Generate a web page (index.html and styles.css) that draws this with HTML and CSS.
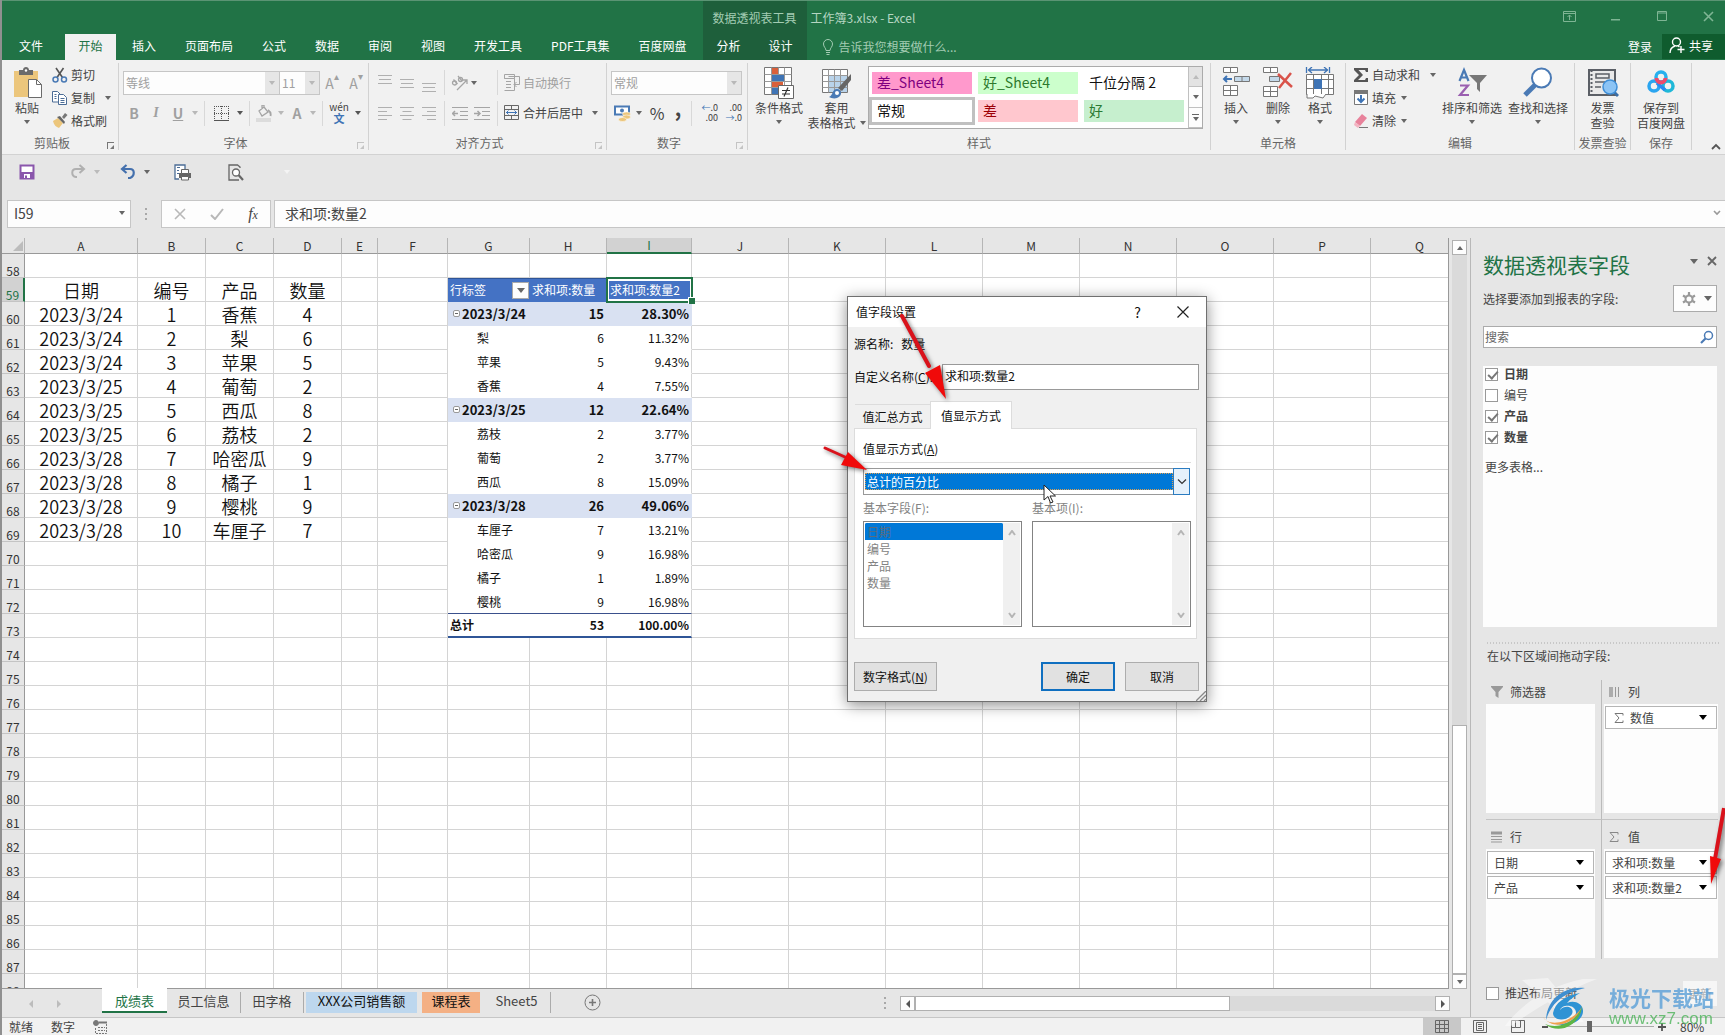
FILE: index.html
```html
<!DOCTYPE html>
<html lang="zh-CN">
<head>
<meta charset="utf-8">
<title>工作簿3.xlsx - Excel</title>
<link rel="stylesheet" href="styles.css">
</head>
<body>
<div class="app">
  <header class="titlebar">
    <nav class="tabs">
      <button class="tab file">文件</button>
      <button class="tab active">开始</button>
      <button class="tab">插入</button>
      <button class="tab">页面布局</button>
      <button class="tab">公式</button>
      <button class="tab">数据</button>
      <button class="tab">审阅</button>
      <button class="tab">视图</button>
      <button class="tab">开发工具</button>
      <button class="tab">PDF工具集</button>
      <button class="tab">百度网盘</button>
    </nav>
    <div class="context">
      <div class="context-title">数据透视表工具</div>
      <div class="context-tabs"><button class="tab">分析</button><button class="tab">设计</button></div>
    </div>
    <div class="doc">
      <div class="doc-title">工作簿3.xlsx - Excel</div>
      <button class="tell"><svg width="12" height="16" viewBox="0 0 12 16" fill="none" stroke="#a3ccb3"><path d="M4 11.5C4 9 1.5 8 1.5 5a4.5 4.5 0 0 1 9 0c0 3-2.500 4-2.500 6.500zM4 13.500h4M4.500 15.500h3"/></svg>告诉我您想要做什么...</button>
    </div>
    <div class="win">
      <div class="win-controls">
        <button aria-label="功能区显示选项"><svg width="14" height="12" viewBox="0 0 14 12" fill="none" stroke="#7fb594"><path d="M.5.5h12v10H.5zM.5 2.500h12M6.500 9V4M4.500 6l2-2 2 2"/></svg></button>
        <button aria-label="最小化"><svg width="14" height="12" viewBox="0 0 14 12"><path d="M2 8h9v1.500H2z" fill="#7fb594"/></svg></button>
        <button aria-label="最大化"><svg width="14" height="12" viewBox="0 0 14 12" fill="none" stroke="#7fb594"><path d="M2.500.5h9v9h-9zM2.500 2h9"/></svg></button>
        <button aria-label="关闭"><svg width="14" height="12" viewBox="0 0 14 12" fill="none" stroke="#7fb594" stroke-width="1.600"><path d="M3 1l9 9M12 1l-9 9"/></svg></button>
      </div>
      <div class="account">
        <button class="login">登录</button>
        <button class="share"><svg width="16" height="17" viewBox="0 0 16 17" fill="none" stroke="#fff" stroke-width="1.400"><circle cx="7.500" cy="5" r="4"/><path d="M1 16c0-4 2-6 5-7M9 9l1.500 1M12 9v7M8.500 12.500h7"/></svg>共享</button>
      </div>
    </div>
  </header>

  <section class="ribbon">
    <div class="group g-clip">
      <div class="content">
        <button class="big paste">
          <svg width="30" height="32" viewBox="0 0 30 32"><path d="M1 4h24v26H1z" fill="#ecc67c"/><path d="M6 3h4c0-4 6-4 6 0h4v5H6z" fill="#6b6b6b"/><circle cx="13" cy="3.500" r="1.200" fill="#fff"/><path d="M15.500 12.500h8l5 5v13h-13z" fill="#fff" stroke="#6b6b6b"/><path d="M23.500 12.500v5h5" fill="none" stroke="#6b6b6b"/></svg>
          <span>粘贴</span><i class="caret"></i></button>
        <div class="smalls">
          <button class="small"><svg width="16" height="16" viewBox="0 0 16 16" fill="none" stroke="#555" stroke-width="1.600"><path d="M4 1l6.500 9.500M11.500 1L5 10.500"/><g stroke="#4a7ab5" stroke-width="1.500"><circle cx="3.500" cy="12.500" r="2.500"/><circle cx="12" cy="12.500" r="2.500"/></g></svg>剪切</button>
          <button class="small"><svg width="16" height="16" viewBox="0 0 16 16" fill="#fff" stroke="#4c6d96"><path d="M.5 1.500h5l2.500 2.500v8H.5z"/><path d="M6.500 4.500h5l3 3v7h-8z"/><path d="M2.500 4.500h2M2.500 6.500h2M2.500 8.500h2M8.500 8.500h4M8.500 10.500h4M8.500 12.500h4"/></svg>复制<i class="caret far"></i></button>
          <button class="small"><svg width="16" height="16" viewBox="0 0 16 16"><path d="M1 8l5-3 5 5-4 5C4 14 2 12 1 8z" fill="#ecc67c"/><path d="M5 4l3-1 5 6-1 2z" fill="#666"/><path d="M10 4l3-4 2.500 2-3.500 4z" fill="#777"/></svg>格式刷</button>
        </div>
      </div>
      <div class="caption">剪贴板</div><i class="launch on"></i>
    </div>

    <div class="group g-font">
      <div class="content rows off">
        <div class="row">
          <label class="combo font"><select aria-label="字体"><option>等线</option></select><b><i class="caret"></i></b></label>
          <label class="combo size"><select aria-label="字号"><option>11</option></select><b><i class="caret"></i></b></label>
          <button class="tool w24 grow">A<sup>▴</sup></button><button class="tool w24 shrink">A<sup>▾</sup></button>
        </div>
        <div class="row">
          <button class="tool bold">B</button><button class="tool ital">I</button><button class="tool undl">U</button><button class="tool car"><i class="caret"></i></button>
          <hr><button class="tool w26"><svg width="15" height="15" viewBox="0 0 15 15" stroke="#555" fill="none"><path d="M.5 0v14M7.500 0v14M14.500 0v14M0 .5h15M0 7.500h15" stroke-dasharray="1 1"/><path d="M0 14.500h15"/></svg></button><button class="tool car"><i class="caret dark"></i></button>
          <hr><button class="tool"><svg width="16" height="17" viewBox="0 0 16 17"><path d="M3 6l5-4 4 5-6 4zM6 4V0h2v3" fill="none" stroke="#a5a5a5" stroke-width="1.300"/><path d="M12 5c3 2 3 4 2.500 6" fill="none" stroke="#a5a5a5" stroke-width="1.800"/><path d="M0 13h15v4H0z" fill="#dcdcdc"/></svg></button><button class="tool car"><i class="caret"></i></button><button class="tool w20 fcol">A</button><button class="tool car"><i class="caret"></i></button>
          <hr><button class="tool w26 wen"><span>wén</span><b>文</b></button><button class="tool car"><i class="caret dark"></i></button>
        </div>
      </div>
      <div class="caption">字体</div><i class="launch"></i>
    </div>

    <div class="group g-align">
      <div class="content rows">
        <div class="row">
          <button class="tool al"><svg width="14" height="18" viewBox="0 0 14 18" stroke="#b0b0b0"><path d="M0 1.500h14M1 5.500h12M0 9.500h14"/></svg></button>
          <button class="tool al"><svg width="14" height="18" viewBox="0 0 14 18" stroke="#b0b0b0"><path d="M0 5.500h14M1 9.500h12M0 13.500h14"/></svg></button>
          <button class="tool al"><svg width="14" height="18" viewBox="0 0 14 18" stroke="#b0b0b0"><path d="M0 9.500h14M1 13.500h12M0 17.500h14"/></svg></button>
          <hr><button class="tool"><svg width="18" height="16" viewBox="0 0 18 16" fill="none" stroke="#a5a5a5" stroke-width="1.300"><circle cx="3.500" cy="8" r="2"/><path d="M2.500 4.500l4 4.500M7 1l4 5"/><circle cx="9.500" cy="4.500" r="2"/><path d="M6 15L16 5M16 9V5h-4"/></svg></button><i class="caret"></i>
          <hr class="second"><button class="tool text off"><svg width="16" height="17" viewBox="0 0 16 17" fill="none" stroke="#a5a5a5"><path d="M.5.5h10v4H.5zM.5 16.500h10v-12H.5M2 7.500h5M2 10.500h5M2 13.500h5M4.500 2.500h11v8h-5M12.500 8l-2.500 2.500 2.500 2.500"/></svg>自动换行</button>
        </div>
        <div class="row">
          <button class="tool al"><svg width="14" height="13" viewBox="0 0 14 13" stroke="#b0b0b0"><path d="M0 .5h14M0 4.500h9M0 8.500h14M0 12.500h9"/></svg></button>
          <button class="tool al"><svg width="14" height="13" viewBox="0 0 14 13" stroke="#b0b0b0"><path d="M0 .5h14M2.500 4.500h9M0 8.500h14M2.500 12.500h9"/></svg></button>
          <button class="tool al"><svg width="14" height="13" viewBox="0 0 14 13" stroke="#b0b0b0"><path d="M0 .5h14M5 4.500h9M0 8.500h14M5 12.500h9"/></svg></button>
          <hr><button class="tool al"><svg width="16" height="13" viewBox="0 0 16 13" fill="none" stroke="#a5a5a5"><path d="M0 .5h16M8 4.500h8M8 8.500h8M0 12.500h16"/><path d="M1 6.500h5M3 4L.5 6.500 3 9" stroke-width="1.500"/></svg></button><button class="tool al"><svg width="16" height="13" viewBox="0 0 16 13" fill="none" stroke="#a5a5a5"><path d="M0 .5h16M8 4.500h8M8 8.500h8M0 12.500h16"/><path d="M0 6.500h5M3.500 4L6 6.500 3.500 9" stroke-width="1.500"/></svg></button>
          <hr class="third"><button class="tool text"><svg width="16" height="16" viewBox="0 0 16 16" fill="none" stroke="#666"><path d="M.5.5h14v14H.5zM.5 4.500h14M.5 10.500h14M7.500.5v4M7.500 10.500v4"/><path d="M2 7.500h11M4.500 5.500l-2 2 2 2M10.500 5.500l2 2-2 2" stroke="#3f74b5"/></svg>合并后居中<i class="caret dark"></i></button>
        </div>
      </div>
      <div class="caption">对齐方式</div><i class="launch"></i>
    </div>

    <div class="group g-num">
      <div class="content rows">
        <div class="row"><label class="combo num"><select aria-label="数字格式"><option>常规</option></select><b><i class="caret"></i></b></label></div>
        <div class="row">
          <button class="tool"><svg width="17" height="17" viewBox="0 0 17 17"><path d="M1 1.500h14v8H1z" fill="#fff" stroke="#4a7ab5" stroke-width="2"/><circle cx="8" cy="5.500" r="2" fill="#4a7ab5"/><g fill="#ecc67c" stroke="#fff" stroke-width=".5"><ellipse cx="12.500" cy="9" rx="4" ry="2"/><ellipse cx="12.500" cy="12" rx="4" ry="2"/><ellipse cx="8.500" cy="14.500" rx="4" ry="2"/></g></svg></button><button class="tool car"><i class="caret dark"></i></button><button class="tool w24 pct">%</button><button class="tool w20 comma">,</button>
          <hr><button class="tool w24 dec"><span><em>←</em>.0</span><span>.00</span></button><button class="tool w24 dec"><span>.00</span><span><em>→</em>.0</span></button>
        </div>
      </div>
      <div class="caption">数字</div><i class="launch"></i>
    </div>

    <div class="group g-style">
      <div class="content">
        <button class="big cond">
          <svg width="30" height="32" viewBox="0 0 30 32"><path d="M.5.5h27v27H.5z" fill="#fff" stroke="#777"/><path d="M8 1h6v6H8zM8 15h11v5H8z" fill="#d9603b"/><path d="M8 8h12v6H8zM8 21h6v6H8z" fill="#3f74b5"/><path d="M7.500.5v27M14.500.5v7M20.500.5v27M.5 7.500h27M.5 14.500h27M.5 20.500h27" fill="none" stroke="#999"/><path d="M14.500 18.500h15v13h-15z" fill="#fff" stroke="#666"/><path d="M18 23.500h8M18 27h8M24 20.500l-4 9" stroke="#333" stroke-width="1.200"/></svg>
          <span>条件格式</span><i class="caret"></i></button>
        <button class="big tfmt">
          <svg width="30" height="32" viewBox="0 0 30 32"><path d="M.5 2.500h25v23H.5z" fill="#fff" stroke="#777"/><path d="M7 9h18v16H7z" fill="#b9d3ea"/><path d="M6.500 2.500v23M12.500 2.500v23M18.500 2.500v23M.5 8.500h25M.5 14.500h25M.5 20.500h25" stroke="#999"/><path d="M29 7v6l-9 11-4-3z" fill="#666"/><path d="M7 30c4-1 3-8 8-8s6 7 0 9c-3 1-6 0-8-1z" fill="#4a7ab5"/><circle cx="15" cy="26" r="2" fill="#fff"/></svg>
          <span>套用</span><span>表格格式<i class="caret"></i></span></button>
        <div class="gallery">
          <div class="cells">
            <button class="st pink">差_Sheet4</button><button class="st lime">好_Sheet4</button><button class="st">千位分隔 2</button>
            <button class="st sel">常规</button><button class="st bad">差</button><button class="st good">好</button>
          </div>
          <div class="spin"><button class="dis" aria-label="上一行"><i class="caret up"></i></button><button aria-label="下一行"><i class="caret"></i></button><button class="more" aria-label="其他"><i class="caret"></i></button></div>
        </div>
      </div>
      <div class="caption">样式</div>
    </div>

    <div class="group g-cells">
      <div class="content">
        <button class="big w42"><svg width="30" height="32" viewBox="0 0 30 32" fill="#fff" stroke="#777"><path d="M2.500.5h14v5h-14zM9.500.5v5M2.500 18.500h14v10h-14zM9.500 18.500v10M2.500 23.500h14"/><path d="M13.500 9.500h15v5h-15zM21 9.500v5" fill="#c4d9ea"/><path d="M3 12h8M6 9l-3 3 3 3" fill="none" stroke="#3f74b5" stroke-width="2"/></svg><span>插入</span><i class="caret"></i></button>
        <button class="big w42"><svg width="30" height="32" viewBox="0 0 30 32" fill="#fff" stroke="#777"><path d="M.5.5h14v5H.5zM7.500.5v5M.5 19.500h14v10H.5zM7.500 19.500v10M.5 24.500h14"/><path d="M6.500 9.500h10v5h-10z" fill="#c4d9ea"/><path d="M15 7l14 13M28 6L16 21" fill="none" stroke="#d9534a" stroke-width="2.500"/></svg><span>删除</span><i class="caret"></i></button>
        <button class="big w42"><svg width="30" height="32" viewBox="0 0 30 32" fill="#fff" stroke="#777"><path d="M1.500 7.500h27v20h-27zM1.500 12.500h27M1.500 21.500h27M8.500 7.500v20M16.500 7.500v20M23.500 7.500v20"/><path d="M9 12h8v10H9z" fill="#3f74b5" stroke="none"/><path d="M2 27v4h6l2-2 8 2 3-4" /><path d="M1.500 0v6M24.500 0v6M3 3h20M7 0L3.500 3 7 6M19 0l3.500 3L19 6" fill="none" stroke="#3f74b5" stroke-width="1.300"/></svg><span>格式</span><i class="caret"></i></button>
      </div>
      <div class="caption">单元格</div>
    </div>

    <div class="group g-edit">
      <div class="content">
        <div class="smalls">
          <button class="small"><svg width="16" height="16" viewBox="0 0 16 16"><path d="M1 1h14v4h-2l-1-2H5.500L10 8l-5 5h7l1-2h2v4H1v-2l5-5-5-5z" fill="#555"/></svg>自动求和<i class="caret far"></i></button>
          <button class="small"><svg width="16" height="16" viewBox="0 0 16 16"><path d="M1.500 1.500h13v13h-13z" fill="#fff" stroke="#777"/><path d="M1 0h14v4H1z" fill="#777"/><path d="M8 5v7M4.500 8.500L8 12l3.500-3.500" fill="none" stroke="#3f74b5" stroke-width="2"/></svg>填充<i class="caret"></i></button>
          <button class="small"><svg width="16" height="16" viewBox="0 0 16 16"><path d="M2 9l7-8 5 4-7 8z" fill="#e8829b"/><path d="M2 9l5 4-2 2-4-3z" fill="#f3b3c1"/><path d="M6 14.500h9" stroke="#777"/></svg>清除<i class="caret"></i></button>
        </div>
        <button class="big w65"><svg width="30" height="32" viewBox="0 0 30 32"><path d="M2.500 14L7 3l4.500 11M4 10.500h6" fill="none" stroke="#4a7ab5" stroke-width="2.200"/><path d="M3 18.500h8L3 28h9" fill="none" stroke="#9a5fb0" stroke-width="2.200"/><path d="M12 8h18l-7 8v9l-3-3v-6z" fill="#777"/></svg><span>排序和筛选</span><i class="caret"></i></button>
        <button class="big w65"><svg width="30" height="32" viewBox="0 0 30 32" fill="#fff" stroke="#4a7ab5"><path d="M12 18L2 28" stroke-width="5"/><circle cx="18.500" cy="11" r="9.500" stroke-width="2"/></svg><span>查找和选择</span><i class="caret"></i></button>
      </div>
      <div class="caption">编辑</div>
    </div>

    <div class="group g-inv">
      <div class="content"><button class="big w55"><svg width="32" height="32" viewBox="0 0 32 32"><path d="M2 3h26v25H2z" fill="#e9e9e9" stroke="#5b5f66" stroke-width="2"/><path d="M4.500 3v25" stroke="#5b5f66" stroke-dasharray="2 2" stroke-width="2"/><path d="M9 7h13v4H9zM8 15h10M8 20h6" fill="none" stroke="#5b5f66" stroke-width="1.500"/><path d="M27 25l4 4" stroke="#3a6fa8" stroke-width="3"/><circle cx="23" cy="20" r="7" fill="#8cc4f5" stroke="#3f8fd8" stroke-width="1.500"/></svg><span>发票</span><span>查验</span></button></div>
      <div class="caption">发票查验</div>
    </div>
    <div class="group g-save">
      <div class="content"><button class="big w61"><svg width="28" height="32" viewBox="0 0 28 32" fill="none"><circle cx="7" cy="19" r="5" stroke="#2aa5f0" stroke-width="3.500"/><circle cx="21" cy="19" r="5" stroke="#1fb8d8" stroke-width="3.500"/><path d="M10 16l8 7" stroke="#2a8af0" stroke-width="3.500"/><circle cx="14" cy="10" r="5" stroke="#27b0ee" stroke-width="3.500"/><path d="M9.500 11a4.500 4.500 0 0 0 9 0" stroke="#ee4a6b" stroke-width="4"/></svg><span>保存到</span><span>百度网盘</span></button></div>
      <div class="caption">保存</div>
    </div>
    <button class="collapse" aria-label="折叠功能区"><svg width="10" height="7" viewBox="0 0 10 7" fill="none" stroke="#555" stroke-width="1.800"><path d="M1 6l4-4 4 4"/></svg></button>
  </section>

  <div class="qat">
    <button aria-label="保存"><svg width="16" height="16" viewBox="0 0 16 16"><path d="M1.500 1.500h13v13h-13z" fill="#fff" stroke="#8a56ac" stroke-width="2"/><path d="M2 8h12v6H2z" fill="#8a56ac"/><path d="M5 10h6v4H5z" fill="#fff"/><path d="M6 11.500h2V14H6z" fill="#8a56ac"/></svg></button>
    <button class="redo" aria-label="恢复"><svg width="16" height="16" viewBox="0 0 16 16" fill="none" stroke="#b0b0b0" stroke-width="2"><path d="M13 5H6c-5 0-5 7 0 8h1M9.500 1L14 5 9.500 9"/></svg></button><i class="caret pale"></i>
    <button class="undo" aria-label="撤消"><svg width="16" height="16" viewBox="0 0 16 16" fill="none" stroke="#4470ad" stroke-width="2.200"><path d="M3 5h7c5 0 5 7 0 9H8M6.500 1L2 5l4.500 4"/></svg></button><i class="caret"></i>
    <button class="qprint" aria-label="快速打印"><svg width="18" height="17" viewBox="0 0 18 17"><path d="M11 5V1H1v14h4" fill="#fff" stroke="#4c6d96" stroke-width="1.300"/><path d="M3 3.500h3M3 6.500h2M3 9.500h2" stroke="#4c6d96"/><path d="M5 9h12v5H5z" fill="#666"/><path d="M7.500 5.500h7v4h-7zM7.500 12.500h7v3.500h-7z" fill="#fff" stroke="#666"/></svg></button>
    <button class="preview" aria-label="打印预览"><svg width="16" height="17" viewBox="0 0 16 17" fill="none" stroke="#666" stroke-width="1.300"><path d="M12 4V3L9.500 1H1v15h10"/><circle cx="8" cy="8.500" r="3.500" fill="#fff"/><path d="M10.500 11l4.500 5" stroke-width="2.200"/></svg></button>
    <i class="caret faint"></i>
  </div>

  <div class="fbar">
    <div class="namebox"><input aria-label="名称框" value="I59"><i class="caret"></i></div>
    <span class="dots"></span>
    <div class="fbtns">
      <button aria-label="取消"><svg width="12" height="12" viewBox="0 0 12 12" stroke="#b8b8b8" stroke-width="1.600"><path d="M1 1l10 10M11 1L1 11"/></svg></button>
      <button aria-label="输入"><svg width="14" height="12" viewBox="0 0 14 12" fill="none" stroke="#b8b8b8" stroke-width="2"><path d="M1 7l4 4 8-10"/></svg></button>
      <button class="fx" aria-label="插入函数">f<small>x</small></button>
    </div>
    <div class="formula"><input aria-label="编辑栏" value="求和项:数量2"><svg width="8" height="6" viewBox="0 0 8 6" fill="none" stroke="#999" stroke-width="1.600"><path d="M1 1l3 3 3-3"/></svg></div>
  </div>

  <main class="work">
    <div class="left">
      <div class="upper">
        <div class="sheet"><table class="grid" id="grid"><colgroup><col class="c0"><col class="c113"><col class="c68"><col class="c68"><col class="c68"><col class="c36"><col class="c70"><col class="c82"><col class="c77"><col class="c85"><col class="c97"><col class="c97"><col class="c97"><col class="c97"><col class="c97"><col class="c97"><col class="c97"><col></colgroup></table></div>
        <div class="vscroll"><span class="sb"><i class="caret up"></i></span><span class="vtrack"></span><span class="vthumb"></span><span class="sb"><i class="caret"></i></span></div>
      </div>
      <div class="sheets">
        <span class="navs"><i class="tri l"></i><i class="tri r"></i></span>
        <button class="sh on">成绩表</button><button class="sh w75">员工信息</button><button class="sh w63">田字格</button><button class="sh blue">XXX公司销售额</button><button class="sh orange">课程表</button><button class="sh w68">Sheet5</button>
        <button class="plus" aria-label="新工作表"><svg width="17" height="17" viewBox="0 0 17 17" fill="none" stroke="#777"><circle cx="8.500" cy="8.500" r="7.500"/><path d="M8.500 5v7M5 8.500h7" stroke-width="1.600"/></svg></button>
        <span class="dots"></span>
        <div class="hscroll"><span class="sb"><i class="tri l dk"></i></span><span class="hthumb"></span><span class="htrack"></span><span class="sb"><i class="tri r dk"></i></span></div>
      </div>
    </div>

    <aside class="pane">
      <div class="pane-head"><h2>数据透视表字段</h2><i class="caret wide"></i><button aria-label="关闭窗格"><svg width="10" height="10" viewBox="0 0 10 10" stroke="#666" stroke-width="1.800"><path d="M1 1l8 8M9 1L1 9"/></svg></button></div>
      <div class="pane-sub"><span>选择要添加到报表的字段:</span><button class="gear" aria-label="工具"><svg width="14" height="14" viewBox="0 0 14 14" fill="none" stroke="#999"><circle cx="7" cy="7" r="3.500" stroke-width="2"/><path d="M7 0v3M7 11v3M1 3.500l2.500 1.500M10.500 9l2.500 1.500M1 10.500L3.500 9M10.500 5L13 3.500" stroke-width="2.200"/></svg><i class="caret wide"></i></button></div>
      <div class="search"><input aria-label="搜索" placeholder="搜索"><svg width="14" height="14" viewBox="0 0 14 14" fill="none" stroke="#4a7ab5"><circle cx="8.500" cy="5.500" r="4" stroke-width="1.500"/><path d="M5.500 8.500L1 13" stroke-width="2.200"/></svg></div>
      <div class="fields">
        <label class="b"><input type="checkbox" checked>日期</label>
        <label><input type="checkbox">编号</label>
        <label class="b"><input type="checkbox" checked>产品</label>
        <label class="b"><input type="checkbox" checked>数量</label>
        <a href="#">更多表格...</a>
      </div>
      <div class="drag">在以下区域间拖动字段:</div>
      <div class="areas">
        <section class="area"><h3><svg width="12" height="12" viewBox="0 0 12 12"><path d="M0 0h12v1L7.500 6v6L4.500 10V6L0 1z" fill="#999"/></svg>筛选器</h3><div class="drop"></div></section>
        <section class="area"><h3><svg width="12" height="12" viewBox="0 0 12 12" stroke="#999"><path d="M1 1v10M3 1v10" stroke-width="1.500"/><path d="M6.500 1v10M9.500 1v10"/></svg>列</h3><div class="drop"><button class="chip sum"><svg width="10" height="10" viewBox="0 0 10 10" fill="none" stroke="#777"><path d="M9 2.500V.5H1L5 5 1 9.500h8v-2"/></svg><span>数值</span><i class="caret blk"></i></button></div></section>
        <section class="area"><h3><svg width="12" height="12" viewBox="0 0 12 12" stroke="#999"><path d="M0 2h11" stroke-width="3"/><path d="M0 5.500h11M0 8.500h11M0 11h11"/></svg>行</h3><div class="drop"><button class="chip"><span>日期</span><i class="caret blk"></i></button><button class="chip"><span>产品</span><i class="caret blk"></i></button></div></section>
        <section class="area"><h3><svg width="12" height="10" viewBox="0 0 12 10" fill="none" stroke="#888"><path d="M9 2.500V.5H1L5 5 1 9.500h8v-2"/></svg>值</h3><div class="drop"><button class="chip"><span>求和项:数量</span><i class="caret blk"></i></button><button class="chip"><span>求和项:数量2</span><i class="caret blk"></i></button></div></section>
      </div>
      <div class="defer"><label><input type="checkbox">推迟布局更新</label><button>更新</button></div>
    </aside>
  </main>

  <footer class="status">
    <span>就绪</span><span>数字</span><svg width="14" height="14" viewBox="0 0 14 14" fill="none" stroke="#777"><circle cx="3" cy="3" r="2.500" fill="#777"/><path d="M6 2.500h7.500v11h-11V7M5 7.500h7M5 10.500h7" stroke-dasharray="2 1"/><path d="M6 2.500h8" stroke-width="2"/></svg>
    <div class="views">
      <button class="on" aria-label="普通"><svg width="14" height="14" viewBox="0 0 14 14" fill="none" stroke="#666"><path d="M.5.5h13v12H.5zM.5 4.500h13M.5 8.500h13M4.500.5v12M9.500.5v12"/></svg></button>
      <button aria-label="页面布局"><svg width="14" height="14" viewBox="0 0 14 14" fill="none" stroke="#666"><path d="M.5.5h13v12H.5zM3.500 2.500h7v8h-7zM5 4.500h4M5 6.500h4M5 8.500h4"/></svg></button>
      <button aria-label="分页预览"><svg width="14" height="14" viewBox="0 0 14 14" fill="none" stroke="#666"><path d="M.5.5h13v12H.5zM4.500.5v7h5v-7M.5 7.500h4"/></svg></button>
    </div>
    <div class="zoom"><svg width="8" height="8" viewBox="0 0 8 8" stroke="#555" stroke-width="2"><path d="M1 4h6"/></svg><input type="range" min="10" max="210" value="80" aria-label="显示比例"><svg width="8" height="8" viewBox="0 0 8 8" stroke="#555" stroke-width="1.800"><path d="M0 4h8M4 0v8"/></svg><span>80%</span></div>
  </footer>

  <div class="dialog" role="dialog" aria-label="值字段设置">
    <div class="dlg-title"><span>值字段设置</span><button aria-label="帮助">?</button><button aria-label="关闭"><svg width="12" height="12" viewBox="0 0 12 12" stroke="#222" stroke-width="1.200"><path d="M.5.5l11 11M11.500.5l-11 11"/></svg></button></div>
    <div class="dlg-body">
      <div class="src"><span>源名称:</span><span>数量</span></div>
      <div class="cname"><label for="cname">自定义名称(<u>C</u>):</label><input id="cname" value="求和项:数量2"></div>
      <div class="dlg-tabs"><button>值汇总方式</button><button class="on">值显示方式</button></div>
      <div class="page">
        <label class="lab" for="showas">值显示方式(<u>A</u>)</label>
        <div class="showas"><select id="showas"><option>总计的百分比</option></select><span><svg width="10" height="6" viewBox="0 0 10 6" fill="none" stroke="#333" stroke-width="1.200"><path d="M1 .5L5 4.500 9 .5"/></svg></span></div>
        <div class="lists">
          <div><label for="bf">基本字段(F):</label><div class="list"><select id="bf" size="6" disabled><option selected>日期</option><option>编号</option><option>产品</option><option>数量</option></select><span class="ls"><svg width="8" height="6" viewBox="0 0 8 6"><path d="M1 5l3-4 3 4"/></svg><svg width="8" height="6" viewBox="0 0 8 6"><path d="M1 1l3 4 3-4"/></svg></span></div></div>
          <div><label for="bi">基本项(I):</label><div class="list"><select id="bi" size="6" disabled></select><span class="ls"><svg width="8" height="6" viewBox="0 0 8 6"><path d="M1 5l3-4 3 4"/></svg><svg width="8" height="6" viewBox="0 0 8 6"><path d="M1 1l3 4 3-4"/></svg></span></div></div>
        </div>
      </div>
      <div class="btns"><button class="nf">数字格式(<u>N</u>)</button><button class="ok">确定</button><button>取消</button></div>
    </div>
    <svg class="grip" width="10" height="10" viewBox="0 0 10 10" stroke="#888" stroke-width="1.300"><path d="M0 10L10 0M4 10l6-6M8 10l2-2"/></svg>
  </div>

  <svg class="arrow a1" width="60" height="100" viewBox="0 0 60 100"><path d="M8 7l27 50" stroke="#d9121b" stroke-width="4" stroke-linecap="round"/><path d="M52 90L31 64l15-8z" fill="#f00a0a"/></svg>
  <svg class="arrow a2" width="54" height="36" viewBox="0 0 54 36"><path d="M6 8l20 9" stroke="#d9121b" stroke-width="3" stroke-linecap="round"/><path d="M48 30l-26-5 7-13z" fill="#f00a0a"/></svg>
  <svg class="arrow a3" width="20" height="84" viewBox="0 0 20 84"><path d="M19 4L10 55" stroke="#d9121b" stroke-width="4"/><path d="M6 80L5 52l11 3z" fill="#f00a0a"/></svg>
  <svg class="cursor" width="14" height="21" viewBox="0 0 14 21"><path d="M1 1v15l4-3.500 2.500 6.500 2.500-1-3-6h5.500z" fill="#fff" stroke="#222"/></svg>
  <div class="mark">
    <svg width="136" height="52" viewBox="0 0 136 52"><g fill="#fff" opacity=".45"><path d="M17 2l26-2 36 44H66z"/><path d="M78 1h14C58 14 28 32 6 48H0C18 24 44 8 78 1z"/></g><path d="M80 10C58 8 42 22 41 42c6-18 18-27 39-32z" fill="#3f8fd0"/><path d="M75 15c-16 3-25 10-27 20 0 8 14 9 19 1 3-7-7-10-12-4 2-6 15-6 16 2 0 8-10 13-20 12 14 4 28-4 27-14-1-7-9-10-16-7 3-4 8-7 13-10z" fill="#2f93d4"/><path d="M38 39c6 11 30 5 39-10-6 16-28 25-39 10z" fill="#f0a04b"/><path d="M40 46c14 6 33-3 37-18-1 18-22 30-37 18z" fill="#5eb545"/></svg>
    <div><strong>极光下载站</strong><em>www.xz7.com</em></div>
  </div>
</div>
<script src="script.js"></script>
</body>
</html>
```
FILE: styles.css
```css
* { box-sizing: border-box; }
body {
  margin: 0;
  font: 12px/16px "Noto Sans CJK SC", "Noto Sans", sans-serif;
  color: #444;
  background: #e6e6e6;
}
button, input, select { font: inherit; color: inherit; }
button { background: none; border: 0; padding: 0; margin: 0; }
input { min-width: 0; }
svg { display: block; flex: none; }
.app {
  position: relative;
  height: 100vh;
  min-height: 700px;
  display: flex;
  flex-direction: column;
  border-left: 2px solid #909090;
  overflow: hidden;
}
.caret {
  display: inline-block;
  flex: none;
  width: 0;
  height: 0;
  border: 3px solid transparent;
  border-top: 4px solid #666;
  border-bottom: 0;
}
.caret.up { border-top: 0; border-bottom: 4px solid #666; }
.caret.wide, .caret.blk { border-width: 5px 4px 0; }
.caret.blk { border-top-color: #000; }
.caret.pale { border-top-color: #bbb; }
.caret.faint { border-top-color: #f4f4f4; }

/* title bar */
.titlebar { display: flex; height: 60px; flex: none; background: #217346; color: #fff; border-top: 1px solid #5b9474; }
.tabs { display: flex; align-items: flex-end; }
.tab { height: 26px; padding: 0 14px 2px 15px; color: #fff; white-space: nowrap; line-height: 22px; }
.tab.file { width: 63px; padding: 0 5px 2px 0; }
.tab.active { width: 51px; padding: 0 0 2px; margin-right: 1px; background: #f1f1f1; color: #217346; }
.context { background: #1e5f3b; width: 104px; margin-left: 2px; display: flex; flex-direction: column; justify-content: space-between; }
.context-title { height: 33px; line-height: 33px; text-align: center; color: #a3ccb3; }
.context-tabs { display: flex; }
.context-tabs .tab { flex: 1; padding: 0 0 2px; }
.doc-title { height: 33px; line-height: 33px; padding-left: 4px; color: #b5d6c2; }
.tell { display: flex; align-items: center; gap: 5px; height: 26px; padding-left: 15px; color: #a3ccb3; }
.win { margin-left: auto; }
.win-controls { display: flex; gap: 32px; height: 33px; align-items: center; padding: 0 10px 2px 0; justify-content: flex-end; }
.account { display: flex; justify-content: flex-end; }
.login { width: 34px; padding-right: 10px; height: 25px; color: #fff; white-space: nowrap; line-height: 24px; }
.share { width: 63px; height: 25px; background: #0f5c2e; color: #fff; display: flex; align-items: center; gap: 4px; padding: 0 0 2px 7px; }

/* ribbon */
.ribbon { display: flex; flex: none; height: 95px; background: #f1f1f1; border-bottom: 1px solid #d2d2d2; padding-top: 3px; }
.group { position: relative; flex: none; display: flex; flex-direction: column; height: 87px; border-right: 1px solid #d2d2d2; }
.content { display: flex; flex: none; height: 72px; }
.caption { height: 16px; line-height: 16px; text-align: center; color: #666; white-space: nowrap; }
.launch { position: absolute; right: 4px; bottom: 1px; width: 7px; height: 7px; border: 1px solid #c4c4c4; border-right: 0; border-bottom: 0; }
.launch::after { content: ""; position: absolute; right: 0; bottom: 0; border: 2px solid #c4c4c4; border-top-color: transparent; border-left-color: transparent; }
.launch.on, .launch.on::after { border-right-color: #777; border-bottom-color: #777; }
.launch.on { border-color: #777; }
.g-clip { width: 117px; }
.g-font { width: 250px; }
.g-align { width: 238px; }
.g-num { width: 141px; }
.g-clip .caption, .g-font .caption, .g-align .caption, .g-num .caption { padding-right: 16px; }
.g-style { width: 463px; }
.g-cells { width: 135px; }
.g-edit { width: 229px; }
.g-inv { width: 56px; }
.g-save { width: 61px; }
.big { display: flex; flex-direction: column; align-items: center; padding-top: 4px; white-space: nowrap; line-height: 15px; }
.big > svg { margin-bottom: 1px; }
.big > .caret { margin-top: 5px; }
.big span .caret { margin: 0 0 3px 4px; }
.paste { width: 50px; }
.paste > svg { margin-left: 2px; }
.smalls { display: flex; flex-direction: column; }
.small { display: flex; align-items: center; gap: 3px; height: 23px; white-space: nowrap; }
.small .caret { margin-left: 2px; }
.small .far { margin-left: 7px; }
.rows { flex-direction: column; }
.row { display: flex; align-items: center; height: 30px; padding-left: 4px; }
.row:first-child { height: 35px; padding-top: 4px; }
.row hr { width: 1px; height: 25px; border: 0; background: #d8d8d8; margin: 0 4px; flex: none; }
.off, .off .caret { color: #a0a0a0; }
.combo { display: flex; height: 24px; border: 1px solid #c6c6c6; background: #fdfdfd; color: #a0a0a0; }
.combo select { flex: 1; min-width: 0; appearance: none; background: none; border: 0; padding: 0 2px; }
.combo b { width: 14px; background: #e6e6e6; display: flex; align-items: center; justify-content: center; }
.combo .caret, .off .caret { border-top-color: #b8b8b8; }
.off .caret.dark { border-top-color: #555; }
.font { width: 157px; }
.size { width: 40px; border-left: 0; }
.num { width: 131px; }
.tool { display: flex; align-items: center; justify-content: center; width: 22px; height: 24px; flex: none; }
.w20 { width: 20px; }
.w24 { width: 24px; }
.w26 { width: 26px; }
.car { width: 12px; }
.grow, .shrink, .bold, .ital, .undl, .fcol { font-size: 14px; }
.grow sup, .shrink sup { font-size: 10px; line-height: 10px; align-self: flex-start; }
.bold, .fcol { font-weight: 700; }
.ital { font-family: "Liberation Serif", serif; font-style: italic; font-weight: 700; }
.undl { text-decoration: underline; font-weight: 700; }
.wen { flex-direction: column; color: #444; font-size: 10px; line-height: 10px; }
.wen b { color: #3f74b5; font-size: 11px; line-height: 12px; }
.g-font .row hr { margin: 0 3px; }
.g-align .row { padding-left: 5px; }
.g-align hr.second { margin: 0 6px 0 20px; }
.g-align hr.third { margin: 0 6px 0 4px; }
.text { width: auto; gap: 3px; white-space: nowrap; }
.text .caret { margin-left: 6px; }
.pct { font-size: 16px; }
.comma { font-size: 20px; font-weight: 700; padding-bottom: 10px; width: 18px; }
.dec { flex-direction: column; align-items: flex-end; font-size: 9px; line-height: 10px; padding-right: 2px; }
.dec em { color: #3f74b5; font-style: normal; }
.cond { width: 58px; margin-left: 2px; }
.tfmt { width: 57px; }
.gallery { display: flex; height: 63px; margin: 3px 0 0 3px; border: 1px solid #ababab; background: #fff; }
.cells { display: grid; grid-template-columns: repeat(3, 100px); gap: 6px; padding: 5px 3px; align-content: start; width: 319px; }
.st { height: 22px; text-align: left; padding: 0 5px 2px; font-size: 14px; line-height: 20px; color: #111; }
.st.pink { background: #ff99cc; color: #800080; }
.st.lime { background: #ccffcc; color: #2d7a2d; }
.st.bad { background: #ffc7ce; color: #9c0006; }
.st.good { background: #c6efce; color: #2b7a33; }
.st.sel { outline: 3px solid #c0c0c0; }
.spin { display: flex; flex-direction: column; width: 14px; }
.spin button { flex: 1; border-left: 1px solid #c0c0c0; border-bottom: 1px solid #c0c0c0; background: #fdfdfd; display: flex; flex-direction: column; align-items: center; justify-content: center; }
.spin .dis { background: #e3e3e3; }
.spin .dis .caret { border-bottom-color: #bbb; }
.spin .more::before { content: ""; width: 7px; height: 1px; background: #666; margin-bottom: 2px; order: -1; }
.w42 { width: 42px; }
.g-cells .content { padding-left: 4px; }
.g-edit .smalls { width: 93px; padding-left: 7px; }
.w65 { width: 66px; }
.w55 { width: 55px; }
.w61 { width: 60px; }
.collapse { margin-left: auto; align-self: flex-end; padding: 0 4px 4px; }

.qat { display: flex; align-items: center; flex: none; height: 45px; padding: 0 0 11px 17px; }
.qat .redo { margin-left: 35px; }
.qat .undo { margin-left: 20px; }
.qat .qprint { margin-left: 24px; }
.qat .preview { margin-left: 36px; }
.qat .caret { margin-left: 8px; }
.qat .faint { margin-left: 40px; }

.fbar { display: flex; flex: none; height: 28px; padding-left: 5px; margin-bottom: 10px; font-size: 14px; }
.fbar input { flex: 1; border: 0; background: none; padding: 0; outline: 0; }
.namebox, .fbtns, .formula { display: flex; align-items: center; background: #fdfdfd; border: 1px solid #c6c6c6; }
.namebox { width: 124px; padding: 0 5px 2px 6px; }
.fbtns { width: 110px; justify-content: space-around; margin-right: 3px; }
.formula { flex: 1; padding: 0 4px 2px 10px; border-right: 0; }
.fx { font: italic 16px/18px "Liberation Serif", serif; }
.fx small { font-size: 12px; }
.dots { width: 2px; height: 12px; align-self: center; margin: 0 14px; background: repeating-linear-gradient(#a8a8a8 0 2px, transparent 2px 5px); }

/* workbook */
.work { display: flex; flex: 1; min-height: 0; }
.left { flex: 1; min-width: 0; display: flex; flex-direction: column; }
.upper { display: flex; flex: 1; min-height: 0; }
.sheet { flex: 1; min-width: 0; overflow: hidden; background: linear-gradient(#e6e6e6 16px, #fff 16px); border-right: 1px solid #999; border-bottom: 1px solid #999; }
.grid { table-layout: fixed; width: 100%; min-width: 1466px; border-collapse: separate; border-spacing: 0; color: #111; }
.c0 { width: 23px; } .c113 { width: 113px; } .c68 { width: 68px; } .c36 { width: 36px; } .c70 { width: 70px; }
.c82 { width: 82px; } .c77 { width: 77px; } .c85 { width: 85px; } .c97 { width: 97px; }
.grid th { background: #e6e6e6; font-weight: 400; padding: 0; border-right: 1px solid #b5b5b5; color: #333; }
.grid thead th { height: 16px; line-height: 15px; border-bottom: 1px solid #999; }
.grid thead th:last-child { border-right: 0; }
.grid thead th.cur { background: #d2d2d2; border-bottom: 2px solid #217346; line-height: 14px; color: #217346; }
.grid thead th:first-child::after { content: ""; display: block; margin-left: 11px; border: 5px solid #bcbcbc; border-top-color: transparent; border-left-color: transparent; width: 0; }
.grid tbody th { height: 24px; line-height: 13px; vertical-align: bottom; border-bottom: 1px solid #c4c4c4; border-right-color: #999; }
.grid tbody th.cur { background: #d2d2d2; color: #217346; border-right: 2px solid #217346; }
.grid td { height: 24px; padding: 0; border-right: 1px solid #d4d4d4; border-bottom: 1px solid #d4d4d4; white-space: nowrap; }
.grid td.d { font-size: 18px; line-height: 22px; text-align: center; font-weight: 350; padding-top: 1px; }
.grid td.p { border-color: transparent; border-right: 0; line-height: 20px; padding: 0 3px 0 2px; }
.grid td.p.n { text-align: right; }
.grid td.p.last { border-right: 1px solid #d4d4d4; padding-right: 2px; }
.grid td.p.kid { padding-left: 29px; }
.grid td.p.date { background: #d9e1f2; font-size: 13px; font-weight: 700; border-color: #d9e1f2; padding-left: 5px; }
.grid td.p.before { border-bottom-color: #3a508c; }
.grid td.p.tot { font-weight: 700; border-bottom: 2px solid #2f5597; }
.grid td.p.head { background: #4472c4; color: #fff; border-color: #4472c4; border-top: 1px solid #2f5597; }
.grid td.p.head div { display: flex; justify-content: space-between; align-items: center; }
.grid td.p.head.sel { outline: 2px solid #217346; outline-offset: -1px; box-shadow: inset 0 0 0 2px #fff; position: relative; padding-left: 3px; }
.head.sel::after { content: ""; position: absolute; right: -3px; bottom: -3px; width: 6px; height: 6px; background: #217346; border: solid #fff; border-width: 1px 0 0 1px; }
.filter { width: 17px; height: 17px; background: #fdfdfd; border: 1px solid #aaa; display: flex; align-items: center; justify-content: center; margin-right: -2px; }
.tog { display: inline-block; width: 7px; height: 7px; border: 1px solid #999; border-radius: 2px; background: linear-gradient(#666, #666) center/3px 1px no-repeat #fff; margin: 0 2px 2px 0; vertical-align: middle; }

.sb { width: 15px; height: 15px; background: #fdfdfd; border: 1px solid #b0b0b0; display: flex; align-items: center; justify-content: center; flex: none; }
.vscroll { display: flex; flex-direction: column; width: 15px; margin: 2px 3px 0; }
.vtrack { flex: 473; background: #dadada; }
.vthumb { flex: 248; background: #fff; border: 1px solid #b0b0b0; }
.sheets { display: flex; height: 28px; flex: none; }
.navs { width: 100px; display: flex; gap: 24px; padding: 11px 0 0 27px; }
.tri { width: 0; height: 0; border: 4px solid transparent; }
.tri.l { border-right-color: #bcbcbc; border-left: 0; }
.tri.r { border-left-color: #bcbcbc; border-right: 0; }
.tri.l.dk { border-right-color: #555; }
.tri.r.dk { border-left-color: #555; }
.sh { font-size: 13px; height: 21px; line-height: 18px; padding-bottom: 3px; margin: 3px 0; text-align: center; white-space: nowrap; border-right: 1px solid #ababab; flex: none; }
.sh.on { width: 65px; height: 25px; margin: -1px 0 0; padding: 4px 0 2px; background: #fff; color: #217346; border: solid #217346; border-width: 0 0 2px; line-height: 17px; }
.w75 { width: 74px; }
.w63 { width: 63px; }
.w68 { width: 68px; }
.sh.blue { width: 115px; background: #bdd7ee; border: solid #e6e6e6; border-width: 0 2px; color: #111; }
.sh.orange { width: 64px; background: #f4b084; border: solid #e6e6e6; border-width: 0 3px; color: #111; }
.plus { margin: 5px auto 0 33px; align-self: flex-start; }
.hscroll { display: flex; width: 550px; margin: 7px 20px 0 0; flex: none; }
.hthumb { flex: 314; height: 15px; background: #fff; border: 1px solid #b0b0b0; }
.htrack { flex: 205; height: 15px; background: #dadada; }

/* field pane */
.pane { width: 255px; flex: none; display: flex; flex-direction: column; border-left: 1px solid #b8b8b8; padding: 11px 8px 0 12px; }
.pane-head { display: flex; align-items: center; height: 30px; }
.pane-head h2 { margin: 0 auto 0 0; font: 400 21px/30px "Noto Sans CJK SC", sans-serif; color: #217346; }
.pane-head .wide { margin: 0 9px 6px 0; }
.pane-head button { margin-bottom: 6px; }
.pane-sub { display: flex; justify-content: space-between; align-items: center; margin-top: 6px; }
.gear { width: 44px; height: 27px; background: #fdfdfd; border: 1px solid #ababab; display: flex; align-items: center; justify-content: space-around; padding-left: 4px; }
.search { display: flex; align-items: center; height: 22px; margin-top: 14px; background: #fff; border: 1px solid #ababab; padding: 0 2px 1px 0; }
.search input { flex: 1; border: 0; background: none; padding: 0 1px; outline: 0; }
.search input::placeholder { color: #666; opacity: 1; }
.fields { height: 261px; flex: none; margin-top: 18px; background: #fdfdfd; padding-left: 2px; display: flex; flex-direction: column; }
.pane label { display: flex; align-items: center; gap: 6px; height: 21px; padding-bottom: 5px; }
.pane label.b { font-weight: 700; }
.pane input[type=checkbox] { appearance: none; width: 13px; height: 13px; margin: 0; border: 1px solid #999; background: #fff; flex: none; position: relative; }
.pane input:checked::after { content: ""; position: absolute; left: 4px; top: 0; width: 4px; height: 8px; border: solid #777; border-width: 0 2px 2px 0; transform: rotate(42deg); }
.fields a { color: #444; text-decoration: none; margin-top: 9px; }
.drag { margin: 15px -4px 0 4px; padding-top: 6px; background: repeating-linear-gradient(90deg, #c8c8c8 0 1px, transparent 1px 3px) top/100% 2px no-repeat; }
.areas { display: grid; grid-template-columns: 116px 1fr; margin: 16px -1px 0 3px; }
.area { padding: 0 6px 6px 0; height: 140px; border-bottom: 1px solid #c4c4c4; border-right: 1px solid #bbb; }
.area:nth-child(even) { padding: 0 0 6px 2px; border-right: 0; }
.area:nth-child(n+3) { border-bottom: 0; height: 139px; padding-top: 5px; padding-bottom: 0; }
.area h3 { display: flex; align-items: center; gap: 7px; font: inherit; margin: 0; height: 24px; padding-left: 5px; }
.drop { height: 109px; background: #fdfdfd; padding: 2px 1px; display: flex; flex-direction: column; gap: 2px; }
.chip { display: flex; align-items: center; height: 23px; border: 1px solid #b5b5b5; background: #fff; padding: 0 9px 0 6px; gap: 6px; }
.chip.sum { padding-left: 8px; }
.chip span { margin-right: auto; }
.defer { display: flex; justify-content: space-between; align-items: center; margin: 22px 0 0 3px; }
.defer label { padding-bottom: 1px; }
.defer button { width: 34px; height: 25px; background: #f6f6f6; color: #b5b5b5; }

.status { display: flex; align-items: center; gap: 18px; flex: none; height: 18px; background: #f1f1f1; border-top: 1px solid #c6c6c6; padding-left: 7px; overflow: hidden; line-height: 16px; }
.views { display: flex; margin-left: auto; height: 100%; }
.views button { width: 38px; display: flex; justify-content: center; align-items: center; }
.views .on { background: #c8c8c8; }
.zoom { display: flex; align-items: center; width: 184px; margin-left: -14px; }
.zoom input { appearance: none; width: 101px; height: 14px; margin: 0 4px; background: linear-gradient(#aaa, #aaa) center/100% 1px no-repeat; }
.zoom input::-webkit-slider-thumb { appearance: none; width: 5px; height: 11px; background: #666; }
.zoom span { margin-left: 14px; }

/* value field settings */
.dialog { position: absolute; left: 845px; top: 296px; width: 360px; background: #f0f0f0; border: 1px solid #707070; color: #111; box-shadow: 0 3px 14px rgba(0,0,0,.45); }
.dlg-title { display: flex; align-items: center; height: 30px; background: #fff; padding: 0 17px 1px 8px; gap: 36px; }
.dlg-title span { margin-right: auto; }
.dlg-title button:nth-child(2) { font-size: 14px; }
.dlg-body { padding: 7px 7px 10px 6px; }
.src { display: flex; gap: 8px; height: 23px; line-height: 20px; }
.cname { display: flex; align-items: center; margin-top: 7px; }
.cname label { width: 88px; flex: none; padding-bottom: 1px; }
.cname input { flex: 1; height: 26px; border: 1px solid #999; background: #fff; padding: 0 2px 3px; }
.dlg-tabs { display: flex; align-items: flex-end; height: 29px; margin: 10px 0 -1px; padding-left: 1px; position: relative; }
.dlg-tabs button { height: 25px; width: 75px; border-top: 1px solid #dcdcdc; }
.dlg-tabs .on { width: 82px; height: 28px; background: #fff; border: solid #dcdcdc; border-width: 1px 1px 0; }
.page { background: #fff; border: 1px solid #dcdcdc; margin-right: 2px; padding: 12px 5px 11px 8px; height: 211px; }
.lab { display: block; height: 22px; border-bottom: 1px solid #dcdcdc; }
.showas { display: flex; height: 27px; margin: 5px 1px 0 0; border: 1px solid #999; }
.showas select { appearance: none; flex: 1; height: 17px; margin: 4px 1px 0; padding: 0 1px; border: 1px dotted #e0a050; background: #0078d7; color: #fff; line-height: 14px; }
.showas span { width: 17px; margin: -1px; border: 1px solid #2a7bc0; background: #e5f1fb; display: flex; align-items: center; justify-content: center; }
.lists { display: flex; gap: 10px; margin-top: 5px; color: #838383; }
.lists > div { flex: 1; }
.lists label { display: block; height: 21px; }
.list { display: flex; height: 106px; border: 1px solid #838383; padding: 1px; }
.list select { flex: 1; min-width: 0; border: 0; padding: 0; margin: 0; background: #fff; overflow: hidden; opacity: 1; scrollbar-width: none; outline: 0; }
.list option { height: 17px; min-height: 17px; line-height: 17px; padding: 0 2px; color: #838383; }
.list option:checked { background: #0078d7 linear-gradient(#0078d7, #0078d7); color: #5a6b7c; }
.ls { width: 17px; background: #f0f0f0; display: flex; flex-direction: column; justify-content: space-between; align-items: center; padding: 7px 0; }
.ls path { fill: none; stroke: #b5b5b5; stroke-width: 2; }
.btns { display: flex; gap: 10px; margin-top: 23px; }
.btns button { width: 74px; height: 29px; background: #e1e1e1; border: 1px solid #adadad; }
.btns .nf { width: 83px; margin-right: auto; }
.btns .ok { border: 2px solid #0f6fc0; }
.grip { position: absolute; right: 0; bottom: 0; }
.arrow, .cursor, .mark { position: absolute; pointer-events: none; }
.arrow { filter: drop-shadow(2px 2px 2px rgba(0,0,0,.5)); }
.a1 { left: 892px; top: 309px; }
.a2 { left: 817px; top: 440px; }
.a3 { right: 0; top: 804px; }
.cursor { left: 1041px; top: 484px; }
.mark { right: 11px; bottom: 5px; display: flex; }
.mark svg { margin-right: -32px; width: 136px; }
.mark div { display: flex; flex-direction: column; position: relative; opacity: .8; white-space: nowrap; padding-top: 6px; }
.mark strong { font-size: 21px; line-height: 26px; color: #5ba0d8; }
.mark em { font: 400 17px/18px "Liberation Sans", sans-serif; color: #4db45a; }
```
FILE: script.js
```js
const data = {
  59: ['日期', '编号', '产品', '数量'],
  60: ['2023/3/24', 1, '香蕉', 4],
  61: ['2023/3/24', 2, '梨', 6],
  62: ['2023/3/24', 3, '苹果', 5],
  63: ['2023/3/25', 4, '葡萄', 2],
  64: ['2023/3/25', 5, '西瓜', 8],
  65: ['2023/3/25', 6, '荔枝', 2],
  66: ['2023/3/28', 7, '哈密瓜', 9],
  67: ['2023/3/28', 8, '橘子', 1],
  68: ['2023/3/28', 9, '樱桃', 9],
  69: ['2023/3/28', 10, '车厘子', 7]
};
const pivot = {
  60: ['2023/3/24', 15, '28.30%'],
  61: ['梨', 6, '11.32%'],
  62: ['苹果', 5, '9.43%'],
  63: ['香蕉', 4, '7.55%'],
  64: ['2023/3/25', 12, '22.64%'],
  65: ['荔枝', 2, '3.77%'],
  66: ['葡萄', 2, '3.77%'],
  67: ['西瓜', 8, '15.09%'],
  68: ['2023/3/28', 26, '49.06%'],
  69: ['车厘子', 7, '13.21%'],
  70: ['哈密瓜', 9, '16.98%'],
  71: ['橘子', 1, '1.89%'],
  72: ['樱桃', 9, '16.98%'],
  73: ['总计', 53, '100.00%']
};
const letters = 'ABCDEFGHIJKLMNOPQ'.split('');

function pivotCell(row, i) {
  if (row === 59) {
    return [
      '<td class="p head"><div>行标签<button class="filter" aria-label="筛选"><i class="caret wide"></i></button></div></td>',
      '<td class="p head">求和项:数量</td>',
      '<td class="p head sel">求和项:数量2</td>'
    ][i];
  }
  const values = pivot[row];
  const isDate = String(values[0]).startsWith('2023');
  let cls = 'p';
  if (isDate) cls += ' date';
  else if (row === 73) cls += ' tot';
  else if (i === 0) cls += ' kid';
  if (i > 0) cls += ' n';
  if (i === 2) cls += ' last';
  if (row === 72) cls += ' before';
  const toggle = isDate && i === 0 ? '<i class="tog"></i>' : '';
  return `<td class="${cls}">${toggle}${values[i]}</td>`;
}

let html = '<thead><tr><th></th>' +
  letters.map(l => `<th${l === 'I' ? ' class="cur"' : ''}>${l}</th>`).join('') +
  '</tr></thead><tbody>';
for (let row = 58; row <= 88; row++) {
  html += `<tr><th${row === 59 ? ' class="cur"' : ''}>${row}</th>`;
  letters.forEach((l, i) => {
    if (data[row] && i < 4) html += `<td class="d">${data[row][i]}</td>`;
    else if (row >= 59 && row <= 73 && i >= 6 && i <= 8) html += pivotCell(row, i - 6);
    else html += '<td></td>';
  });
  html += '</tr>';
}
document.getElementById('grid').insertAdjacentHTML('beforeend', html + '</tbody>');
```
